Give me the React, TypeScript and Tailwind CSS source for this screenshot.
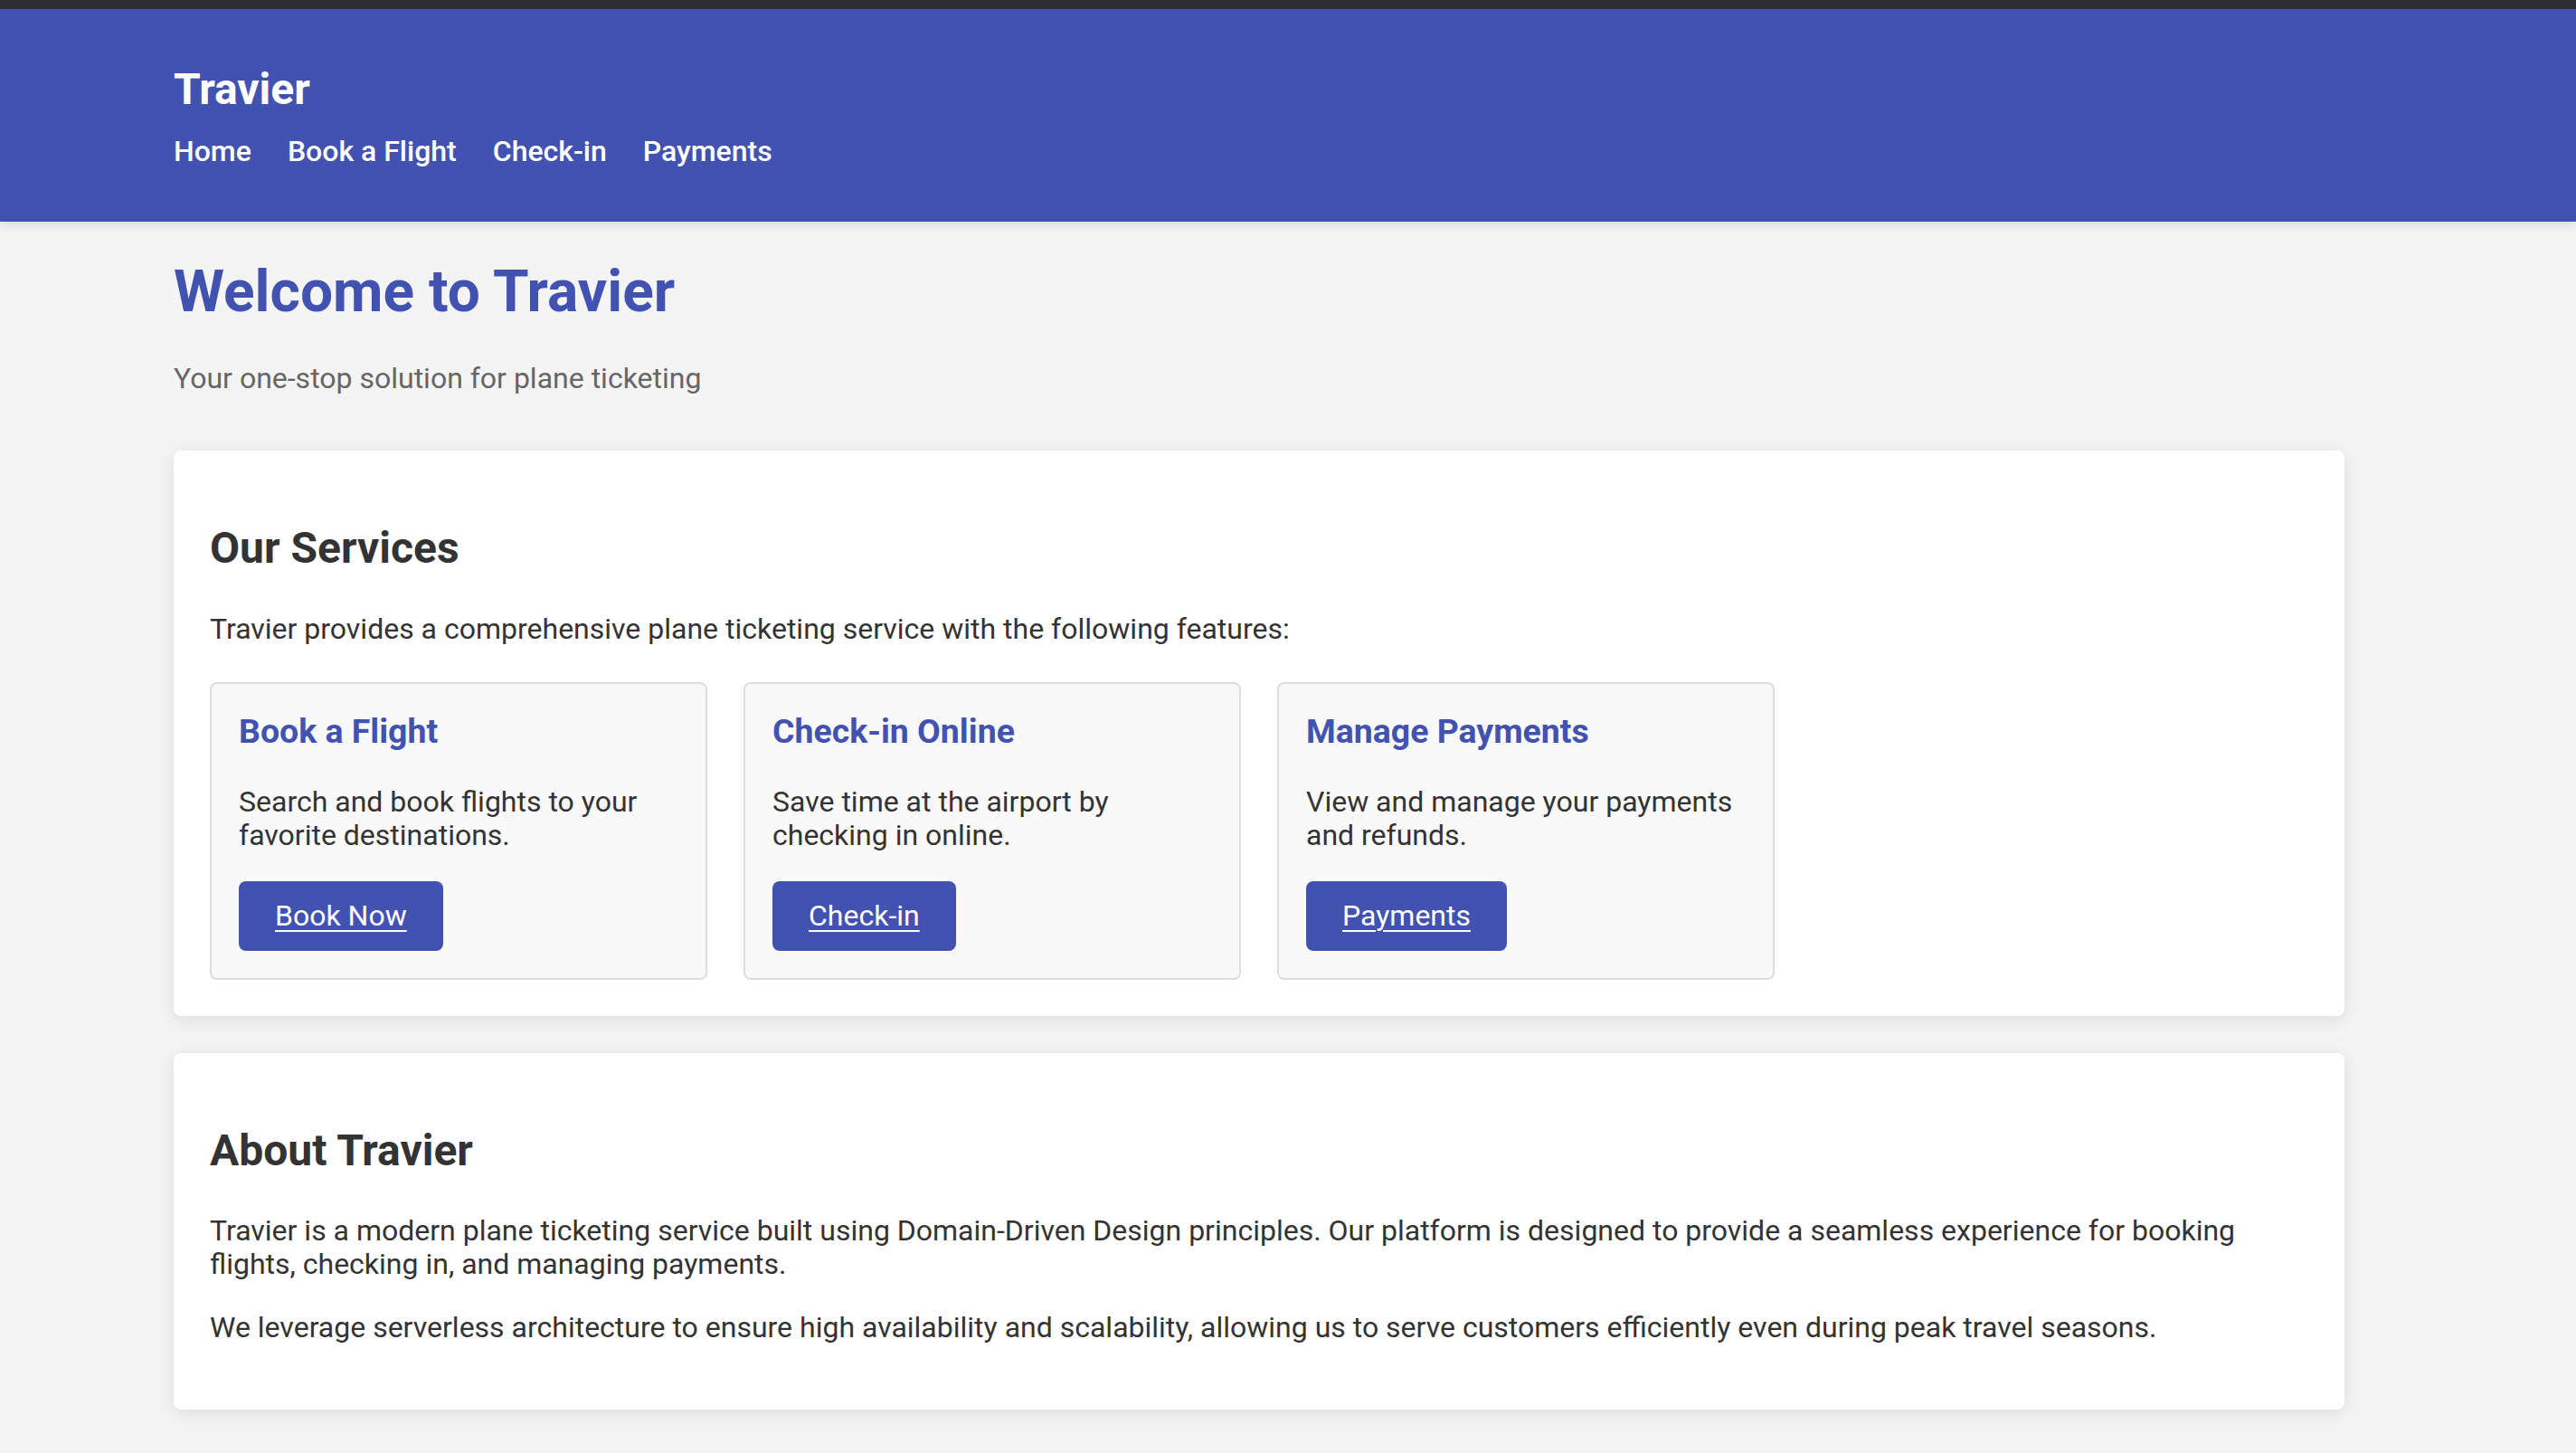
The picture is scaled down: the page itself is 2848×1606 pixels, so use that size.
import React from "react";

const services = [
  {
    title: "Book a Flight",
    text: "Search and book flights to your favorite destinations.",
    button: "Book Now",
  },
  {
    title: "Check-in Online",
    text: "Save time at the airport by checking in online.",
    button: "Check-in",
  },
  {
    title: "Manage Payments",
    text: "View and manage your payments and refunds.",
    button: "Payments",
  },
];

export default function App() {
  return (
    <div className="min-h-screen bg-[#f4f4f4] font-['Roboto',sans-serif] leading-[37px] text-[#333]">
      <div className="h-[10px] bg-[#2d2d30]" />
      <header className="relative bg-[#4252b1] pt-[61px] pb-[59px] text-white shadow-[0_4px_10px_rgba(0,0,0,0.1)]">
        <div className="ml-[192px] w-[2400px]">
          <h1 className="text-[48px] font-bold leading-[56px]">Travier</h1>
          <nav className="mt-[22px] flex gap-[40px] text-[32px] font-medium leading-[37px]">
            <a href="#">Home</a>
            <a href="#">Book a Flight</a>
            <a href="#">Check-in</a>
            <a href="#">Payments</a>
          </nav>
        </div>
      </header>

      <main className="ml-[192px] w-[2400px] pt-[40px] pb-[48px]">
        <h2 className="text-[64px] font-bold leading-[75px] text-[#4252b1]">Welcome to Travier</h2>
        <p className="mt-[40px] text-[32px] leading-[37px] text-[#666]">
          Your one-stop solution for plane ticketing
        </p>

        <section className="mt-[61px] rounded-[8px] bg-white p-[40px] shadow-[0_4px_20px_rgba(0,0,0,0.1)]">
          <h2 className="mt-[40px] text-[48px] font-bold leading-[56px] text-[#333]">Our Services</h2>
          <p className="mt-[43px] text-[32px] leading-[37px]">
            Travier provides a comprehensive plane ticketing service with the following features:
          </p>
          <div className="mt-[40px] grid grid-cols-4 gap-[40px]">
            {services.map((s) => (
              <div
                key={s.title}
                className="flex flex-col items-start rounded-[8px] border-2 border-[#dddddd] bg-[#f9f9f9] p-[30px]"
              >
                <h3 className="text-[37.44px] font-bold leading-[44px] text-[#4252b1]">{s.title}</h3>
                <p className="mt-[38px] text-[32px] leading-[37px]">{s.text}</p>
                <a
                  href="#"
                  className="mt-[32px] rounded-[8px] bg-[#4252b1] px-[40px] py-[20px] text-[32px] leading-[37px] text-white underline decoration-[2px] underline-offset-[5px]"
                >
                  {s.button}
                </a>
              </div>
            ))}
          </div>
        </section>

        <section className="mt-[41px] rounded-[8px] bg-white p-[40px] shadow-[0_4px_20px_rgba(0,0,0,0.1)]">
          <h2 className="mt-[40px] text-[48px] font-bold leading-[56px] text-[#333]">About Travier</h2>
          <p className="mt-[42px] text-[32px] leading-[37px]">
            Travier is a modern plane ticketing service built using Domain-Driven Design principles. Our platform is
            designed to provide a seamless experience for booking flights, checking in, and managing payments.
          </p>
          <p className="mt-[33px] mb-[32px] text-[32px] leading-[37px]">
            We leverage serverless architecture to ensure high availability and scalability, allowing us to serve
            customers efficiently even during peak travel seasons.
          </p>
        </section>
      </main>
    </div>
  );
}
